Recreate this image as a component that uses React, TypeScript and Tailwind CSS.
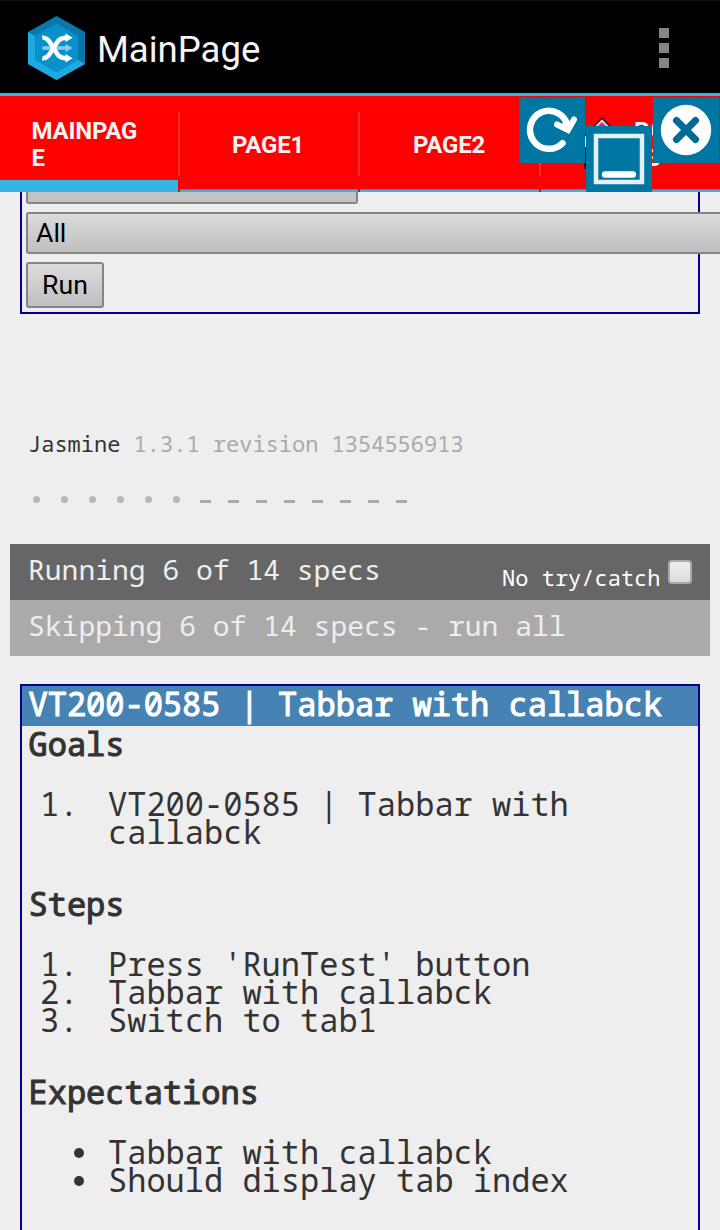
import React from "react";

const mono = "font-['Droid_Sans_Mono','Noto_Sans_Mono','DejaVu_Sans_Mono',monospace]";

function Logo() {
  return (
    <svg className="h-16 w-[57px] shrink-0" viewBox="0 0 57 64">
      <path d="M28.500 0 57 16V48L28.500 64 0 48V16Z" fill="#0878ac" />
      <path d="M0 16 7 20V43L28.500 55.500 50 43.500 57 48 28.500 64 0 48Z" fill="#1fa9e1" />
      <path d="M28.500 7.500 50 20V44L28.500 56.500 7 44V20Z" fill="#0890ca" />
      <path d="M14.300 32H38" stroke="#86cbe9" strokeWidth="3.600" />
      <path d="M37.500 28 44.700 32 37.500 36Z" fill="#86cbe9" />
      <g fill="none" stroke="#fff" strokeWidth="4.600">
        <path d="M14.300 42.200C19 43 21.500 38.500 25.500 32S31 21.700 38 21.700" />
        <path d="M14.300 21.800C19 21 21.500 25.500 25.500 32S31 42.300 38 42.300" />
      </g>
      <path d="M37.500 17.500 44.700 21.700 37.500 25.900ZM37.500 38.100 44.700 42.300 37.500 46.500Z" fill="#fff" />
    </svg>
  );
}

type TabProps = { label: string[]; width: string; align: string; icon?: boolean; selected?: boolean };

function Tab({ label, width, align, icon, selected }: TabProps) {
  return (
    <div className={`flex h-24 shrink-0 ${width}`}>
      <div className="flex min-w-0 flex-1 flex-col">
        <div className={`flex h-24 shrink-0 items-center pt-0.5 font-[Roboto,sans-serif] text-[24px] leading-[27px] font-bold tracking-[-0.2px] text-[#f3f3f3] ${align}`}>
          {icon && (
            <svg className="mr-2 h-14 w-12 shrink-0" viewBox="0 0 48 56">
              <path d="M24 0 48 25V32H42V52H6V32H0V25Z" fill="#301418" />
              <path d="M24 2.200 46 25V30H40V50H8V30H2V25Z" fill="#ddd" />
              <path d="M24 5 35 16V46H13V16Z" fill="#f51880" />
            </svg>
          )}
          <div>{label.map((s) => <div key={s}>{s}</div>)}</div>
        </div>
        <div className={selected ? "-mt-3 h-3 shrink-0 bg-[#33b5e5]" : "-mt-[3px] h-[3px] shrink-0 border-t border-[#8c6a80] bg-[#33b5e5]"} />
      </div>
      <div className="mt-4 h-16 w-0.5 bg-[#ff2a2a]" />
    </div>
  );
}

function Floating() {
  return (
    <>
      <svg className="absolute top-[97px] left-[519px] size-[66px]" viewBox="0 0 66 66">
        <rect width="66" height="66" fill="#0077a3" />
        <path d="M43.500 46.200A19 19 0 1 1 48.600 29" fill="none" stroke="#fff" strokeWidth="6.500" strokeLinecap="round" />
        <path d="M38 27.500 49 33 55 22.500" fill="none" stroke="#fff" strokeWidth="6" strokeLinecap="round" />
        <path d="M42 27 49 23 52 27 49 34Z" fill="#fff" />
      </svg>
      <svg className="absolute top-[126px] left-[586px] size-[66px]" viewBox="0 0 66 66">
        <rect width="66" height="66" fill="#0077a3" />
        <rect x="10" y="10" width="46" height="46" fill="none" stroke="#e3f0f5" strokeWidth="4.500" />
        <path d="M19.200 48.500H46.800" stroke="#fff" strokeWidth="6.600" strokeLinecap="round" />
      </svg>
      <svg className="absolute top-[97px] left-[653px] size-[66px]" viewBox="0 0 66 66">
        <rect width="66" height="66" fill="#0077a3" />
        <circle cx="33" cy="33" r="25.200" fill="#fff" />
        <path d="M23.500 23.500 42.500 42.500M42.500 23.500 23.500 42.500" stroke="#006a96" strokeWidth="7" strokeLinecap="round" />
      </svg>
    </>
  );
}

const control = "border-2 border-[#858585] rounded-[3px] bg-linear-to-b from-[#dcdcdc] to-[#bfbfbf] font-[Roboto,sans-serif] text-[26.67px] leading-[38px] text-black";
const heading = "[-webkit-text-stroke:1.1px]";

function Items({ items, bullet }: { items: string[]; bullet?: boolean }) {
  return (
    <div className="mt-8 mb-11">
      {items.map((t, i) => (
        <div key={t} className="flex">
          <div className="flex w-20 shrink-0 pl-3">
            {bullet ? <span className="mt-2.5 ml-[34px] size-2.5 rounded-full bg-[#333]" /> : `${i + 1}.`}
          </div>
          <div className="min-w-0 flex-1">{t}</div>
        </div>
      ))}
    </div>
  );
}

export default function App() {
  return (
    <div className={`relative h-[1230px] w-[720px] overflow-hidden bg-[#eee] text-[#333] ${mono}`}>
      <header className="flex h-24 items-center border-t border-t-[#111] border-b-[3px] border-b-[#33b5e5] bg-black pt-0.5 pl-7">
        <Logo />
        <h1 className="mt-1 ml-3 font-[Roboto,sans-serif] text-[36.5px] leading-none text-[#f3f3f3]">MainPage</h1>
        <div className="mr-[51px] ml-auto flex flex-col gap-[5px]">
          <i className="size-2.5 bg-[#858585]" />
          <i className="size-2.5 bg-[#858585]" />
          <i className="size-2.5 bg-[#858585]" />
        </div>
      </header>
      <nav className="flex h-24 bg-[red]">
        <Tab label={["MAINPAG", "E"]} width="w-[180px]" align="pl-[31.5px]" selected />
        <Tab label={["PAGE1"]} width="w-[180px]" align="pl-[52px]" />
        <Tab label={["PAGE2"]} width="w-[181px]" align="pl-[53px]" />
        <Tab label={["PAG", "E3"]} width="w-[182px]" align="pl-[37px]" icon />
      </nav>
      <Floating />

      <section className="mx-5 h-[122px] border-x-2 border-b-2 border-[#00008b] pl-1">
        <div className="h-3 w-[332px] rounded-b-[3px] border-2 border-t-0 border-[#858585] bg-[#c3c3c3]" />
        <div className={`mt-2 h-[42px] w-[720px] pl-2 ${control}`}>All</div>
        <div className={`mt-2 flex h-[46px] w-[78px] items-center justify-center ${control}`}>Run</div>
      </section>

      <main className="mt-[115px]">
        <div className="pl-7 text-[22px] leading-7">
          Jasmine <span className="text-[#aaa]">1.3.1 revision 1354556913</span>
        </div>
        <div className="mt-[39px] flex h-3 pl-[33px]">
          {Array.from({ length: 14 }, (_, i) => (
            <div key={i} className="flex w-7 shrink-0">
              {i < 6 ? <span className="size-[7px] rounded-full bg-[#b7b7b7]" /> : <span className="mt-1 -ml-px h-[3px] w-[11px] bg-[#aaa]" />}
            </div>
          ))}
        </div>
        <div className="mx-[10px] mt-9 text-[28px] leading-[50px] text-[#eee]">
          <div className="flex h-14 justify-between bg-[#666] pl-[18px]">
            <span>Running 6 of 14 specs</span>
            <label className="mr-[18px] flex text-[22px] leading-[66px] text-white">
              No try/catch
              <span className="mt-4 ml-[7.5px] size-6 rounded-[4px] border-2 border-[#aaa] bg-linear-to-b from-[#eee] to-[#dcdcdc]" />
            </label>
          </div>
          <div className="h-14 bg-[#aaa] pl-[18px]">Skipping 6 of 14 specs - run all</div>
        </div>
        <section className="mx-5 mt-7 h-[600px] border-2 border-[#00008b] text-[32px] leading-7">
          <h2 className={`h-10 bg-[#4682b4] pt-1 pl-[6.5px] whitespace-nowrap text-white ${heading}`}>VT200-0585 | Tabbar with callabck</h2>
          <div className="pt-1 pl-1.5">
            <h3 className={`pl-[0.5px] ${heading}`}>Goals</h3>
            <Items items={["VT200-0585 | Tabbar with callabck"]} />
            <h3 className={`pl-[0.5px] ${heading}`}>Steps</h3>
            <Items items={["Press 'RunTest' button", "Tabbar with callabck", "Switch to tab1"]} />
            <h3 className={`pl-[0.5px] ${heading}`}>Expectations</h3>
            <Items items={["Tabbar with callabck", "Should display tab index"]} bullet />
          </div>
        </section>
      </main>
    </div>
  );
}
